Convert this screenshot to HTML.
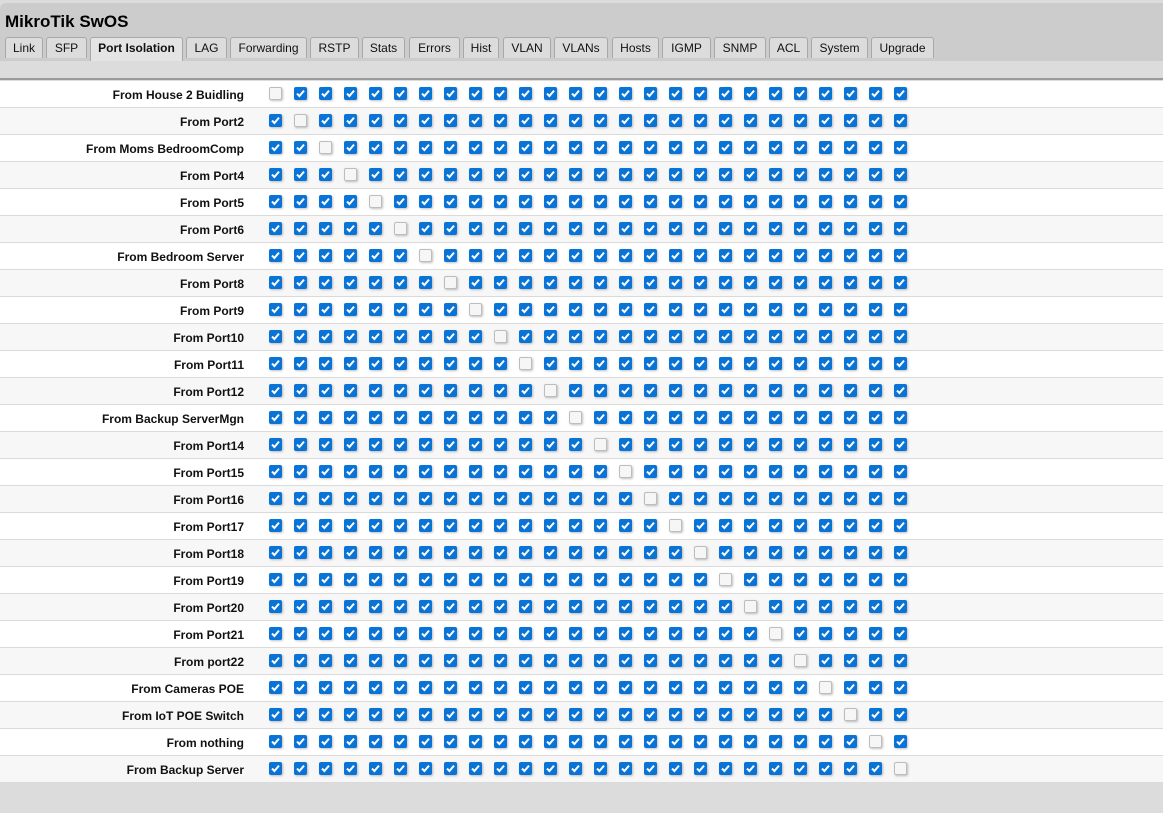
<!DOCTYPE html>
<html><head><meta charset="utf-8"><style>
body{margin:0;width:1163px;height:813px;overflow:hidden;background:#dcdcdc;font-family:"Liberation Sans",Arial,sans-serif;position:relative}
#top{position:absolute;left:0;top:3px;width:1163px;height:58px;background:#cccccc;border-top-left-radius:6px}
#title{position:absolute;left:5px;top:9px;font-weight:bold;font-size:17px;color:#000}
.tab{position:absolute;top:37px;height:21px;border:1px solid #a8a8a8;border-bottom:none;border-radius:3px 3px 0 0;background:#dcdcdc;font-size:12px;line-height:21px;text-align:center;color:#111;box-sizing:border-box}
.tab.act{background:#e4e4e4;font-weight:bold;height:24px}
#band{position:absolute;left:0;top:61px;width:1163px;height:19px;background:#dcdcdc;border-bottom:2px solid #9a9a9a;box-sizing:border-box}
.row{position:absolute;left:0;width:1163px;height:27px;border-bottom:1px solid #dadada;box-sizing:border-box}
.lbl{position:absolute;right:919px;top:7px;font-weight:bold;font-size:12px;color:#111;white-space:nowrap}
.cb{position:absolute;top:6px;width:13px;height:13px;border-radius:2px;box-sizing:border-box;box-shadow:1px 1px 2px rgba(0,0,0,.25)}
.on{background:#0a74d6}
.off{background:#f6f6f6;border:1px solid #bdbdbd}
.on svg{position:absolute;left:2px;top:2px}
</style></head><body>
<div id="top"><div id="title">MikroTik SwOS</div></div>
<div id="band"></div>
<div id="tabs"></div>
<div id="rows"></div>
<script>
var tabs=[["Link",5,43],["SFP",46,87],["Port Isolation",90,183],["LAG",186,227],["Forwarding",230,307],["RSTP",310,359],["Stats",362,405],["Errors",409,460],["Hist",463,499],["VLAN",503,551],["VLANs",554,608],["Hosts",612,659],["IGMP",662,711],["SNMP",714,766],["ACL",769,808],["System",811,868],["Upgrade",871,934]];
var h="";tabs.forEach(function(t){h+='<div class="tab'+(t[0]=="Port Isolation"?' act':'')+'" style="left:'+t[1]+'px;width:'+(t[2]-t[1])+'px">'+t[0]+'</div>';});
document.getElementById("tabs").innerHTML=h;
var L=["From House 2 Buidling","From Port2","From Moms BedroomComp","From Port4","From Port5","From Port6","From Bedroom Server","From Port8","From Port9","From Port10","From Port11","From Port12","From Backup ServerMgn","From Port14","From Port15","From Port16","From Port17","From Port18","From Port19","From Port20","From Port21","From port22","From Cameras POE","From IoT POE Switch","From nothing","From Backup Server"];
var chk='<svg width="9" height="9" viewBox="0 0 9 9"><path d="M1 4.6 L3.4 7 L8 1.6" stroke="#fff" stroke-width="2" fill="none"/></svg>';
h="";L.forEach(function(n,i){h+='<div class="row" style="top:'+(81+i*27)+'px;background:'+(i%2?'#f7f7f7':'#fff')+'"><div class="lbl">'+n+'</div>';
for(var j=0;j<26;j++){h+=j==i?'<div class="cb off" style="left:'+(269+j*25)+'px"></div>':'<div class="cb on" style="left:'+(269+j*25)+'px">'+chk+'</div>';}
h+='</div>';});
document.getElementById("rows").innerHTML=h;
</script>
</body></html>
